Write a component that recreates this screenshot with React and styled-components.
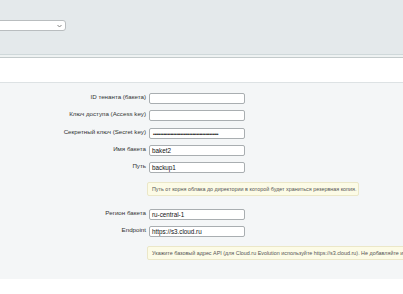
import styled, { createGlobalStyle } from "styled-components";

const Global = createGlobalStyle`
  html, body {
    margin: 0;
    padding: 0;
    background: #ffffff;
    font-family: "Liberation Sans", Arial, sans-serif;
    overflow: hidden;
  }
`;

const Page = styled.div`
  width: 403px;
  height: 294px;
  display: flex;
  flex-direction: column;
  overflow: hidden;
`;

const TopPanel = styled.div`
  height: 55px;
  background: #e4e9eb;
  padding-top: 20px;
  box-sizing: border-box;
  border-bottom: 1px solid #cfd8da;
`;

const TopEdge = styled.div`
  height: 2px;
  background: #eef2f2;
  border-bottom: 1px solid #c3cacb;
`;

const Select = styled.div`
  width: 86px;
  height: 11px;
  margin-left: -20px;
  background: #fff;
  border: 1px solid #b9bdbf;
  border-radius: 3px;
  box-sizing: border-box;
  display: flex;
  align-items: center;
  justify-content: flex-end;
  padding-right: 3px;
`;

const Gap = styled.div`
  height: 24px;
`;

const FormPanel = styled.div`
  background: #f4f6f7;
  border-top: 1px solid #dde2e4;
  padding: 10px 0 19px;
  display: flex;
  flex-direction: column;
`;

const Row = styled.div`
  display: flex;
  align-items: flex-start;
  height: 11px;
  flex-shrink: 0;
  margin-bottom: ${(p) => p.$mb ?? 6.3}px;
`;

const Label = styled.div`
  width: 148px;
  flex-shrink: 0;
  padding-right: 2px;
  box-sizing: border-box;
  text-align: right;
  font-size: 6.2px;
  line-height: 8px;
  color: #333;
  white-space: nowrap;
`;

const Input = styled.div`
  width: 96px;
  height: 11px;
  margin-left: 1px;
  box-sizing: border-box;
  background: #fff;
  border: 1px solid #a9aeb1;
  border-radius: 2px;
  font-size: 6.3px;
  line-height: 9px;
  padding-left: 2px;
  color: #111;
  white-space: nowrap;
  overflow: hidden;
`;

const Dots = styled.span`
  font-size: 5px;
  letter-spacing: -0.3px;
  padding-left: 1px;
`;

const Hint = styled.div`
  margin-left: 147px;
  height: 14px;
  flex-shrink: 0;
  box-sizing: border-box;
  background: #fcfbe6;
  border: 1px solid #ebe7c8;
  border-radius: 2px;
  font-size: 5.4px;
  line-height: 12px;
  padding: 0 4px;
  color: #555;
  white-space: nowrap;
  width: ${(p) => (p.$wide ? "300px" : "212px")};
  margin-bottom: ${(p) => p.$mb ?? 0}px;
`;

function Field({ label, children, mb }) {
  return (
    <Row $mb={mb}>
      <Label>{label}</Label>
      <Input>{children}</Input>
    </Row>
  );
}

export default function App() {
  return (
    <Page>
      <Global />
      <TopPanel>
        <Select>
          <svg width="5" height="4" viewBox="0 0 5 4">
            <path d="M0.5 1 L2.5 3 L4.5 1" fill="none" stroke="#777" strokeWidth="0.9" />
          </svg>
        </Select>
      </TopPanel>
      <TopEdge />
      <Gap />
      <FormPanel>
        <Field label="ID тенанта (бакета)" />
        <Field label="Ключ доступа (Access key)" />
        <Field label="Секретный ключ (Secret key)">
          <Dots>{"•".repeat(45)}</Dots>
        </Field>
        <Field label="Имя бакета">baket2</Field>
        <Field label="Путь" mb={9}>backup1</Field>
        <Hint $mb={12.5}>
          Путь от корня облака до директории в которой будет храниться резервная копия.
        </Hint>
        <Field label="Регион бакета" mb={6.5}>ru-central-1</Field>
        <Field label="Endpoint" mb={9}>https://s3.cloud.ru</Field>
        <Hint $wide>
          Укажите базовый адрес API (для Cloud.ru Evolution используйте https://s3.cloud.ru). Не добавляйте имя бакета
        </Hint>
      </FormPanel>
    </Page>
  );
}
